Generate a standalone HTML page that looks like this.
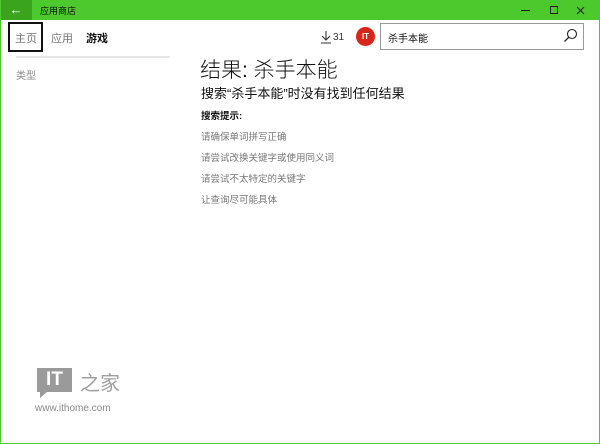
<!DOCTYPE html>
<html><head><meta charset="utf-8"><style>
*{margin:0;padding:0;box-sizing:border-box}
body{width:600px;height:444px;overflow:hidden;background:#fff;font-family:"Liberation Sans","Noto Sans CJK SC",sans-serif;position:relative}
.frame{position:absolute;inset:0;border:1px solid #4cc92c;border-top:none}
.title{position:absolute;left:0;top:0;width:600px;height:20px;background:#4cc92c}
.back{position:absolute;left:0;top:0;width:32px;height:20px;background:#3aa41c;color:#fff;font-size:13px;text-align:center;line-height:19px}
.abs{position:absolute;white-space:nowrap}
</style></head><body>
<div class="title"></div>
<div class="back">&#8592;</div>
<div class="abs" style="left:40px;top:4px;font-size:9px;color:#111">应用商店</div>
<div class="abs" style="left:521px;top:10px;width:9px;border-top:1px solid #222"></div>
<div class="abs" style="left:550px;top:6px;width:8px;height:8px;border:1px solid #222"></div>
<svg class="abs" style="left:576px;top:6px" width="9" height="9" viewBox="0 0 9 9"><path d="M1 1l7 7M8 1l-7 7" stroke="#222" stroke-width="1"/></svg>
<div class="frame"></div>

<div class="abs" style="left:8px;top:22px;width:35px;height:30px;border:2px solid #111"></div>
<div class="abs" style="left:15px;top:30px;font-size:11px;color:#777">主页</div>
<div class="abs" style="left:51px;top:30px;font-size:11px;color:#777">应用</div>
<div class="abs" style="left:86px;top:30px;font-size:11px;color:#111;font-weight:bold">游戏</div>
<div class="abs" style="left:16px;top:56px;width:154px;height:2px;background:#e6e6e6"></div>
<div class="abs" style="left:16px;top:67px;font-size:10px;color:#888">类型</div>

<svg class="abs" style="left:320px;top:30px" width="12" height="14" viewBox="0 0 12 14"><path d="M6 1v9M2 6l4 4 4-4M1 13h10" stroke="#333" fill="none" stroke-width="1.1"/></svg>
<div class="abs" style="left:333px;top:32px;font-size:10px;color:#333">31</div>
<div class="abs" style="left:356px;top:27px;width:19px;height:19px;border-radius:50%;background:#d8261c;color:#fff;font-size:8px;font-weight:bold;text-align:center;line-height:19px">IT</div>
<div class="abs" style="left:380px;top:23px;width:204px;height:27px;border:1px solid #999"></div>
<div class="abs" style="left:388px;top:30px;font-size:10px;color:#111">杀手本能</div>
<svg class="abs" style="left:563px;top:28px" width="15" height="15" viewBox="0 0 15 15"><circle cx="9" cy="6" r="4.5" stroke="#222" fill="none" stroke-width="1.1"/><path d="M5.7 9.3L1.5 13.5" stroke="#222" stroke-width="1.3"/></svg>

<div class="abs" style="left:200px;top:54px;font-size:21px;color:#111;font-weight:300">结果: 杀手本能</div>
<div class="abs" style="left:201px;top:83px;font-size:13px;color:#111">搜索“杀手本能”时没有找到任何结果</div>
<div class="abs" style="left:201px;top:108px;font-size:9.5px;color:#111;font-weight:bold">搜索提示:</div>
<div class="abs" style="left:201px;top:129px;font-size:9.5px;color:#777">请确保单词拼写正确</div>
<div class="abs" style="left:201px;top:150px;font-size:9.5px;color:#777">请尝试改换关键字或使用同义词</div>
<div class="abs" style="left:201px;top:171px;font-size:9.5px;color:#777">请尝试不太特定的关键字</div>
<div class="abs" style="left:201px;top:192px;font-size:9.5px;color:#777">让查询尽可能具体</div>

<div class="abs" style="left:37px;top:368px;width:35px;height:24px;background:#9a9a9a;color:#fff;font-weight:bold;font-size:19px;text-align:center;line-height:24px">IT</div>
<div class="abs" style="left:40px;top:392px;width:0;height:0;border-left:7px solid #9a9a9a;border-bottom:6px solid transparent"></div>
<div class="abs" style="left:80px;top:367px;font-size:20px;color:#a0a0a0">之家</div>
<div class="abs" style="left:35px;top:403px;font-size:10px;color:#888">www.ithome.com</div>
</body></html>
